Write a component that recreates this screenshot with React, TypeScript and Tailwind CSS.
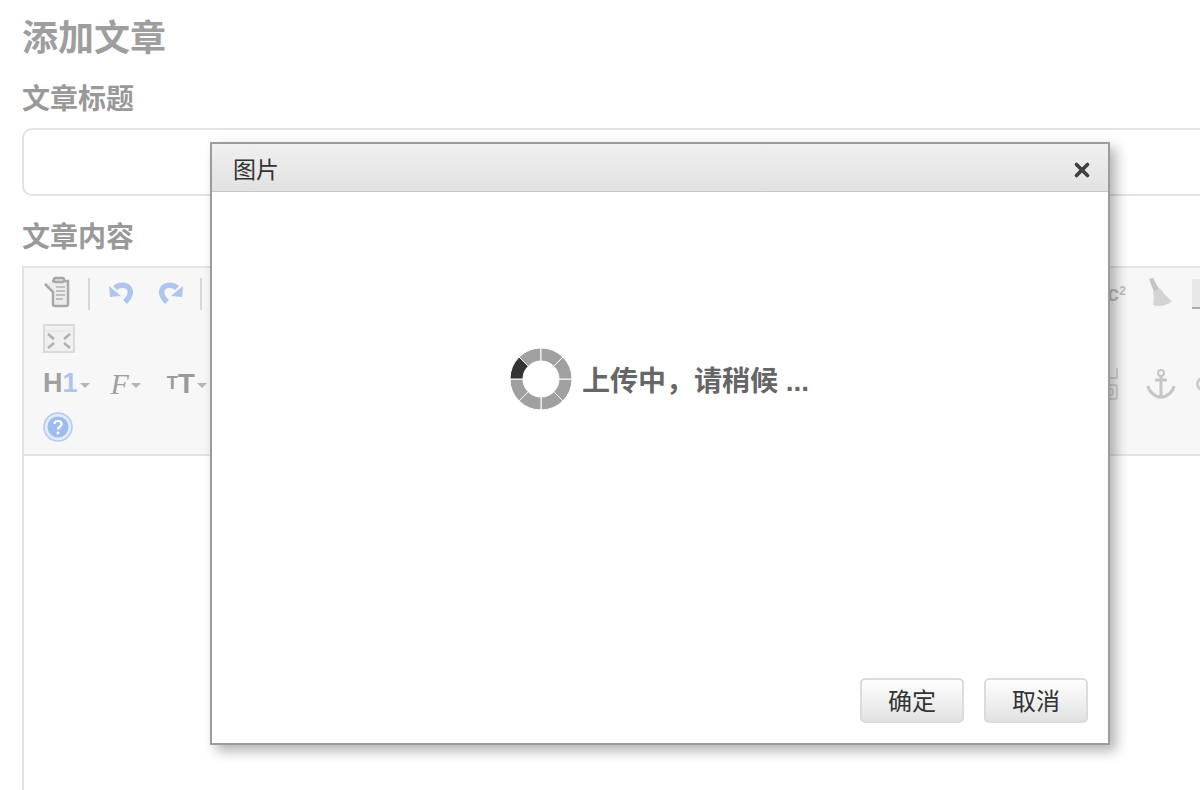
import { X } from 'lucide-react'

const cjk = { fontFamily: '"Liberation Sans", "Noto Sans CJK SC", sans-serif' }

// one 45 degree slice of the loading ring
function ringSlice(i: number) {
  const a0 = (i * Math.PI) / 4
  const a1 = ((i + 1) * Math.PI) / 4
  const p = (r: number, a: number) => `${(31 + r * Math.cos(a)).toFixed(2)} ${(31 + r * Math.sin(a)).toFixed(2)}`
  return `M${p(31, a0)} A31 31 0 0 1 ${p(31, a1)} L${p(18, a1)} A18 18 0 0 0 ${p(18, a0)} Z`
}

function Spinner() {
  return (
    <svg width="62" height="62" viewBox="0 0 62 62" className="shrink-0">
      {[0, 1, 2, 3, 4, 5, 6, 7].map(i => (
        <path key={i} d={ringSlice(i)} fill={i === 4 ? '#333333' : '#a0a0a0'} stroke="#ffffff" strokeWidth="1" />
      ))}
    </svg>
  )
}

function Caret() {
  return <span className="ml-[2px] mt-[4px] h-0 w-0 border-x-[5px] border-t-[5px] border-x-transparent border-t-[#b5b5b5]" />
}

function Sep() {
  return <div className="h-[32px] w-[2px] bg-[#d8d8d8]" />
}

function PasteIcon() {
  return (
    <svg width="30" height="32" viewBox="0 0 30 32" fill="none" stroke="#a8a8a8" strokeWidth="2.500" className="-mt-[3px]">
      <path d="M9 5h16v23a2 2 0 0 1-2 2H12a2 2 0 0 1-2-2V16L2 8" fill="#ececec" />
      <rect x="11" y="2" width="10" height="4" rx="1.500" fill="#e0e0e0" />
      <path d="M13 11h9M13 15h9M13 19h9M13 23h7" strokeWidth="1.500" stroke="#b0b0b0" />
    </svg>
  )
}

function UndoIcon({ flip }: { flip?: boolean }) {
  return (
    <svg width="26" height="26" viewBox="0 0 26 26" fill="none" className={flip ? '-mt-[2px] -scale-x-100' : '-mt-[2px]'}>
      <path d="M7 8c4-4 13-4 15 2 1.500 5-2 9-5 12" stroke="#aec6ee" strokeWidth="5.500" />
      <path d="M1 6l1 11 11-1z" fill="#aec6ee" />
    </svg>
  )
}

function FullscreenIcon() {
  return (
    <svg width="32" height="30" viewBox="0 0 32 30" fill="none">
      <rect x="1" y="1" width="30" height="27" fill="#f0f0f0" stroke="#dadada" strokeWidth="2" />
      <path d="M1 7h30" stroke="#e2e2e2" strokeWidth="1" />
      <path d="M5 10l6 5M27 10l-6 5M5 24l6-5M27 24l-6-5" stroke="#b0b0b0" strokeWidth="2.500" />
    </svg>
  )
}

function HelpIcon() {
  return (
    <svg width="30" height="30" viewBox="0 0 30 30">
      <circle cx="15" cy="15" r="14" fill="#e3ebfa" stroke="#b4caf0" strokeWidth="1.500" />
      <circle cx="15" cy="15" r="10.500" fill="#9fbcee" />
      <path d="M11.500 12c0-4 7-4 7 0 0 3-3.500 2.500-3.500 5.500" fill="none" stroke="#ffffff" strokeWidth="2.200" />
      <circle cx="15" cy="21" r="1.400" fill="#ffffff" />
    </svg>
  )
}

function BroomIcon() {
  return (
    <svg width="28" height="32" viewBox="0 0 28 32">
      <path d="M3 1l4-1 6 11-5 3z" fill="#c4c4c4" />
      <path d="M7 14l7-4c3 5 7 9 12 13-5 5-14 6-19 4 1-4 1-9 0-13z" fill="#d4d4d4" />
    </svg>
  )
}

function AnchorIcon() {
  return (
    <svg width="30" height="32" viewBox="0 0 30 32" fill="none" stroke="#c6c6c6" strokeWidth="3">
      <circle cx="15" cy="5" r="3" strokeWidth="2" />
      <path d="M15 8v21M9 12h12" />
      <path d="M2 18c1 6 7 11 13 11s12-5 13-11" />
    </svg>
  )
}

function LinkStackIcon() {
  return (
    <svg width="18" height="34" viewBox="0 0 18 34" fill="none" stroke="#d6d6d6" strokeWidth="2">
      <path d="M1 1v10h15V1" />
      <rect x="2" y="18" width="14" height="14" rx="2" />
      <circle cx="9" cy="25" r="3" />
    </svg>
  )
}

function Row({ children }: { children: React.ReactNode }) {
  return <div className="flex h-[45px] items-center">{children}</div>
}

function DialogButton({ label }: { label: string }) {
  return (
    <button className="flex h-[45px] w-[104px] items-center justify-center rounded-[5px] border-2 border-[#dcdcdc] bg-gradient-to-b from-[#ffffff] to-[#e2e2e2] pt-[2px] text-[24px] text-[#333333]">
      {label}
    </button>
  )
}

export default function App() {
  return (
    <div className="relative h-[790px] w-[1200px] overflow-hidden bg-white pl-[22px]" style={cjk}>
      <h1 className="text-[36px] leading-[78px] font-bold text-[#9e9e9e]">添加文章</h1>
      <label className="block text-[28px] leading-[44px] font-bold text-[#999999]">文章标题</label>
      <div className="mt-[6px] h-[68px] w-[1260px] rounded-[10px] border-2 border-[#e3e3e3] bg-white" />
      <label className="mt-[20px] block text-[28px] leading-[44px] font-bold text-[#999999]">文章内容</label>

      <div className="mt-[6px] h-[600px] w-[1260px] border-2 border-[#e3e3e3]">
        <div className="h-[188px] border-b-2 border-[#e3e3e3] bg-[#f7f7f7] pt-[3px] pl-[19px]">
          <Row>
            <PasteIcon />
            <div className="ml-[15px]"><Sep /></div>
            <div className="ml-[18px]"><UndoIcon /></div>
            <div className="ml-[24px]"><UndoIcon flip /></div>
            <div className="ml-[16px]"><Sep /></div>
            <div className="ml-auto flex items-center pr-[72px]">
              <span className="mr-[20px] text-[22px] font-bold text-[#bdbdbd]">c<sup className="text-[12px]">2</sup></span>
              <BroomIcon />
              <div className="ml-[18px] h-[30px] w-[16px] border-b-2 border-b-[#aaaaaa] bg-[#e8e8e8]" />
            </div>
          </Row>
          <Row><FullscreenIcon /></Row>
          <Row>
            <span className="text-[27px] font-bold text-[#a0a0a0]">H<span className="text-[#aec6ee]">1</span></span>
            <Caret />
            <span className="ml-[21px] font-['Liberation_Serif',serif] text-[30px] text-[#a0a0a0] italic">F</span>
            <Caret />
            <span className="ml-[26px] text-[18px] font-bold text-[#9a9a9a]">T</span>
            <span className="text-[28px] font-bold text-[#9a9a9a]">T</span>
            <Caret />
            <div className="ml-auto flex items-center pr-[70px]">
              <LinkStackIcon />
              <div className="ml-[27px]"><AnchorIcon /></div>
              <div className="ml-[20px] h-[14px] w-[14px] rounded-full border-[3px] border-[#cccccc]" />
            </div>
          </Row>
          <Row><div className="-mt-[4px]"><HelpIcon /></div></Row>
        </div>
      </div>

      <div className="absolute top-[142px] left-[210px] flex h-[603px] w-[900px] flex-col border-2 border-[#9c9c9c] bg-white shadow-[6px_6px_12px_rgba(0,0,0,0.3)]">
        <div className="flex h-[48px] shrink-0 items-center justify-between border-b border-[#c8c8c8] bg-gradient-to-b from-[#f0f0f0] to-[#e2e2e2] pt-[5px] pr-[15px] pl-[21px]">
          <span className="text-[23px] text-[#333333]">图片</span>
          <X size={22} strokeWidth={4} color="#404040" />
        </div>
        <div className="flex flex-1 flex-col">
          <div className="flex items-center pt-[156px] pl-[298px]">
            <Spinner />
            <span className="mt-[6px] ml-[10px] text-[28px] font-bold text-[#666666]">上传中，请稍候 ...</span>
          </div>
          <div className="mt-auto flex justify-end gap-[20px] pr-[20px] pb-[20px]">
            <DialogButton label="确定" />
            <DialogButton label="取消" />
          </div>
        </div>
      </div>
    </div>
  )
}
